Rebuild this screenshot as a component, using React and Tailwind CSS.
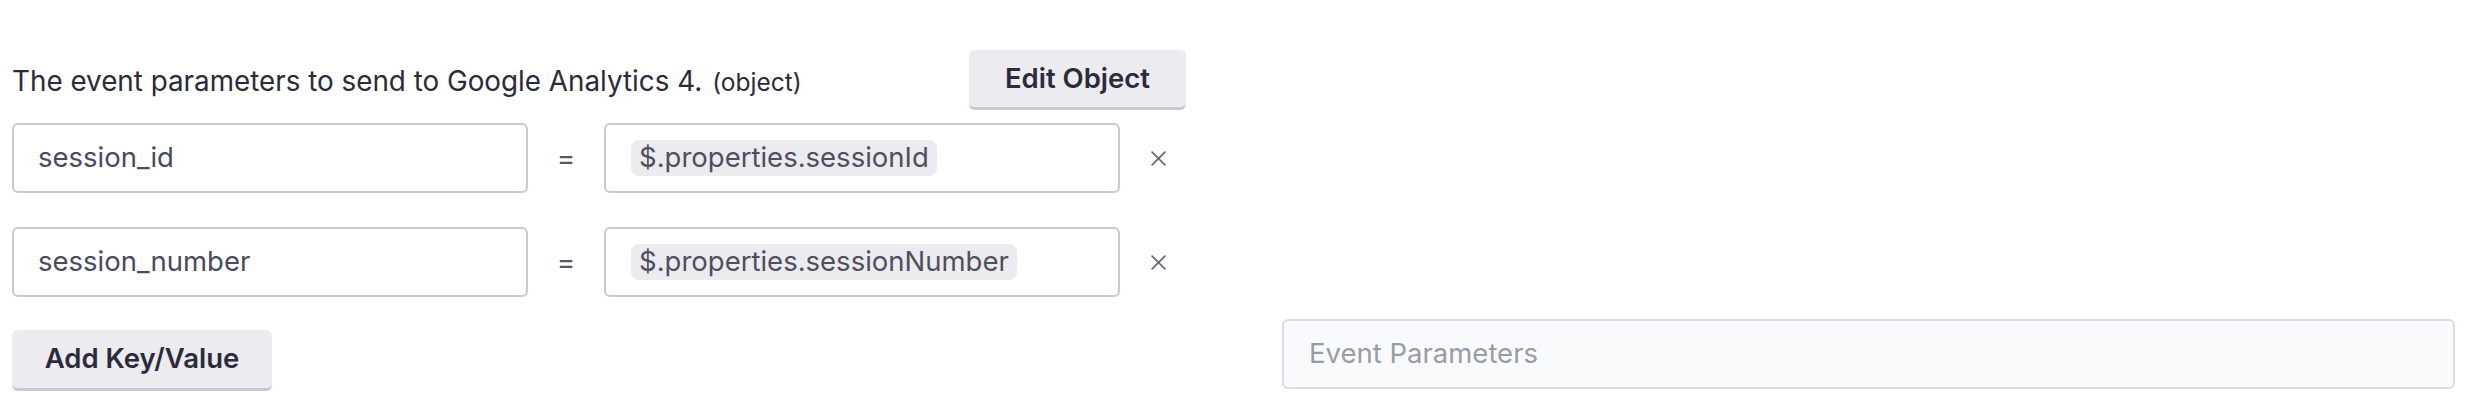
import React from "react";

const params = [
  { key: "session_id", value: "$.properties.sessionId" },
  { key: "session_number", value: "$.properties.sessionNumber" },
];

const ParamRow = ({ name, value }) => (
  <div className="flex items-center">
    <div className="w-[516px] h-[70px] flex items-center px-[24px] border-2 border-[#c9c9d6] rounded-[6px] bg-white text-[27.5px] text-[#4a4a5e]">
      {name}
    </div>
    <div className="w-[76px] flex justify-center text-[28px] text-[#55556a]">=</div>
    <div className="w-[516px] h-[70px] flex items-center pl-[25px] border-2 border-[#c9c9d6] rounded-[6px] bg-white">
      <span className="h-[36px] flex items-center px-[8px] rounded-[8px] bg-[#ebebf0] text-[27.5px] text-[#4f4f60]">
        {value}
      </span>
    </div>
    <button className="ml-[27px] w-[22px] h-[22px] flex items-center justify-center text-[#6b6b80]">
      <svg width="17" height="17" viewBox="0 0 16 16" fill="none" stroke="currentColor" strokeWidth="1.7" strokeLinecap="round">
        <path d="M2 2L14 14M14 2L2 14" />
      </svg>
    </button>
  </div>
);

export default function App() {
  return (
    <div className="w-[2476px] h-[416px] bg-white flex pl-[12px] pr-[21px] font-['Inter',sans-serif]">
      <div className="w-[1174px] flex flex-col pt-[50px]">
        <div className="flex items-center justify-between">
          <div className="flex items-baseline pt-[4px]">
            <span className="text-[27.8px] text-[#2b2b3b]">
              The event parameters to send to Google Analytics 4.
            </span>
            <span className="ml-[10px] text-[24.5px] text-[#2b2b3b]">(object)</span>
          </div>
          <button className="h-[60px] w-[217px] rounded-[6px] bg-[#ebebf0] border-b-[3px] border-[#c9c9d6] text-[27.5px] font-semibold text-[#2b2b3b]">
            Edit Object
          </button>
        </div>
        <div className="mt-[13px] flex flex-col gap-[34px]">
          {params.map((p) => (
            <ParamRow key={p.key} name={p.key} value={p.value} />
          ))}
        </div>
        <div className="mt-[33px]">
          <button className="h-[61px] w-[260px] rounded-[6px] bg-[#ebebf0] border-b-[3px] border-[#c9c9d6] text-[27.5px] font-semibold text-[#2b2b3b]">
            Add Key/Value
          </button>
        </div>
      </div>
      <div className="flex-1 ml-[96px] flex flex-col justify-end pb-[27px]">
        <div className="h-[70px] flex items-center px-[25px] border-2 border-[#dcdce4] rounded-[6px] bg-[#f9fafb] text-[27.5px] text-[#9a9aa8]">
          Event Parameters
        </div>
      </div>
    </div>
  );
}
